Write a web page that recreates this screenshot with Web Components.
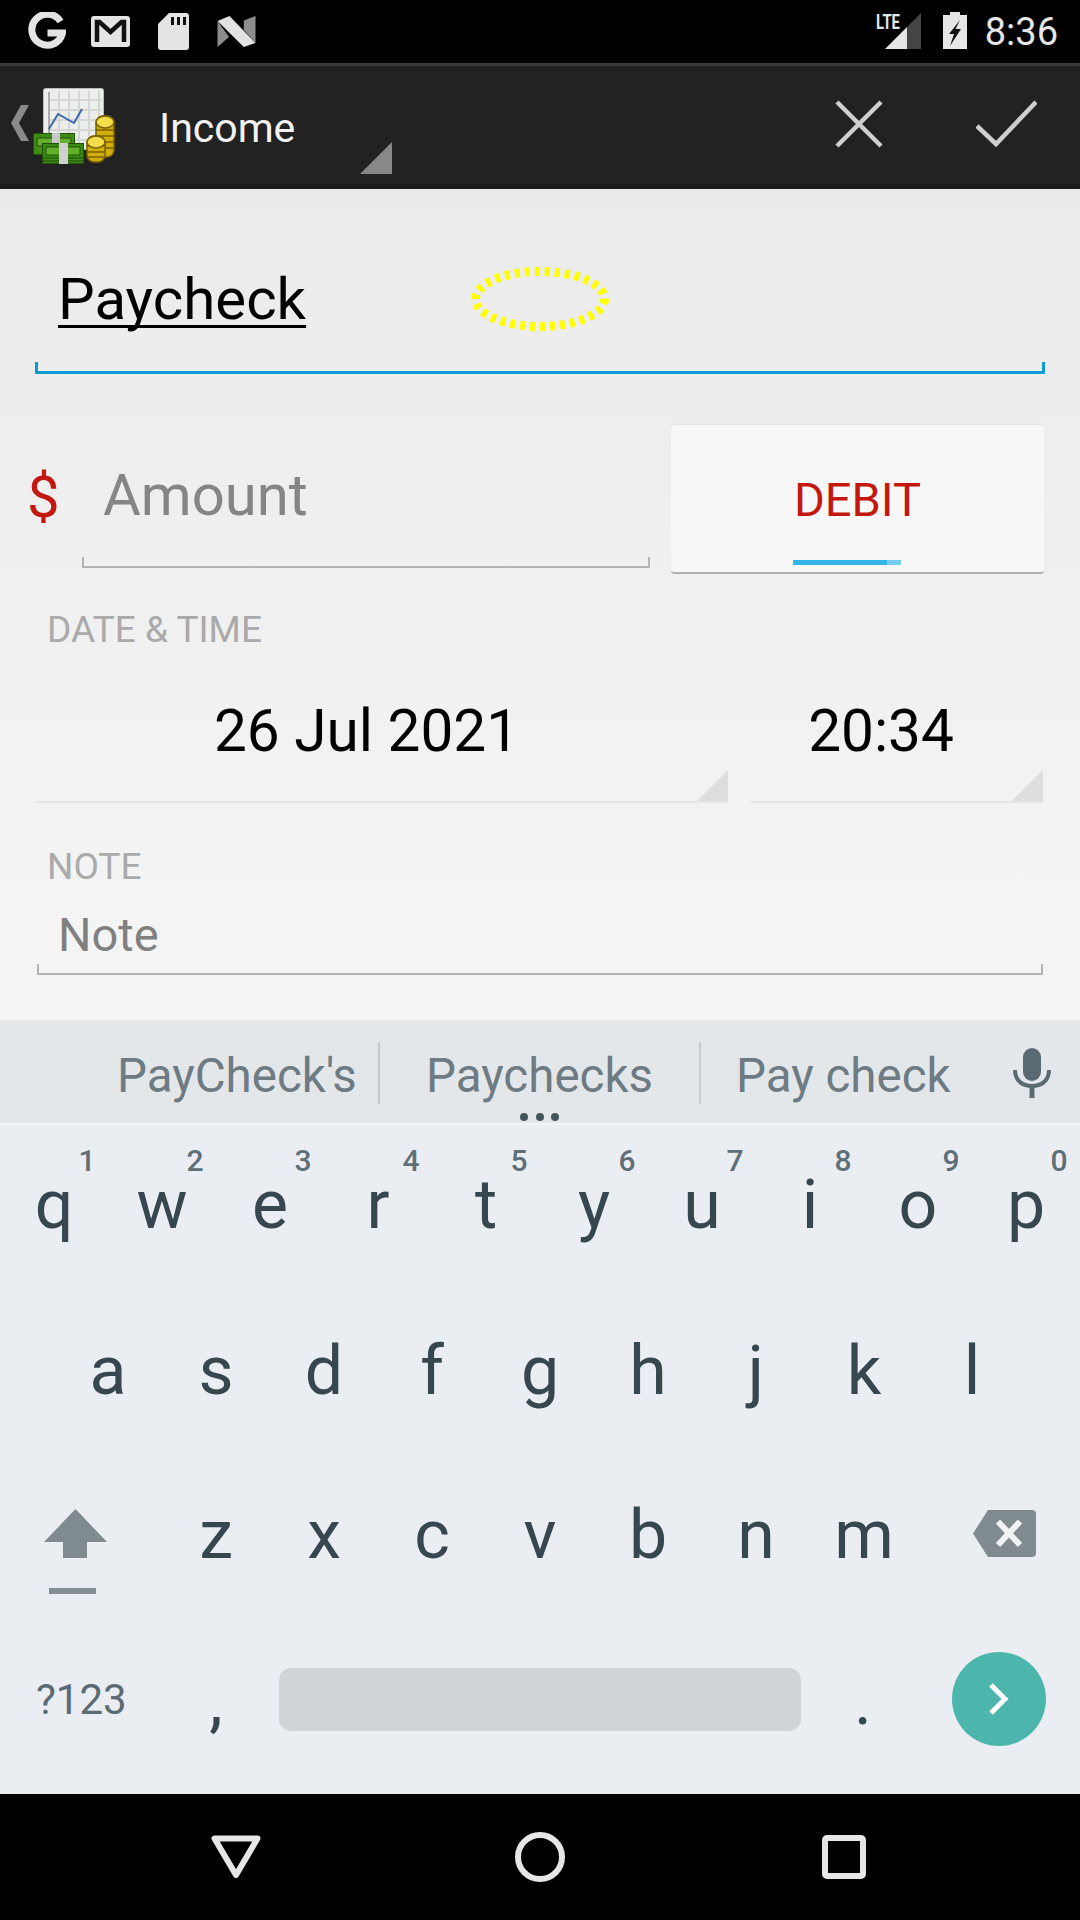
<!DOCTYPE html>
<html>
<head>
<meta charset="utf-8">
<title>Income</title>
<style>
  html, body { margin: 0; padding: 0; }
  body { width: 1080px; height: 1920px; overflow: hidden; font-family: Roboto, "Liberation Sans", sans-serif; }
</style>
</head>
<body>
<app-screen>
  <status-bar></status-bar>
  <action-bar title="Income"></action-bar>
  <edit-form></edit-form>
  <soft-keyboard></soft-keyboard>
  <nav-bar></nav-bar>
</app-screen>

<script>
// Small helper, every element has the same shadow setup
const define = (name, html, Base = HTMLElement) => {
    customElements.define(name, class extends Base {
        constructor() {
            super();
            this.attachShadow({ mode: 'open' });
            this.shadowRoot.innerHTML = typeof html === 'function' ? html(this) : html;
        }
    });
};

define('app-screen', `
<style>
  :host { display: flex; flex-direction: column; width: 1080px; height: 1920px; }
</style>
<slot></slot>`);

define('status-bar', `
<style>
  :host { display: flex; align-items: flex-start; height: 63px; background: #000; color: #e6e6e6; padding: 0 22px 0 28px; box-sizing: border-box; }
  svg { display: block; flex: none; margin-top: 12px; }
  .right { margin-left: auto; display: flex; align-items: flex-start; }
  .time { font-size: 38px; line-height: 38px; margin: 13px 0 0 18px; }
</style>
<svg width="38" height="40" viewBox="0 0 38 40">
  <path d="M32.5 9.5A15.5 15.5 0 1 0 34.5 21H19.5" fill="none" stroke="#e4e4e4" stroke-width="7"/>
</svg>
<svg style="margin-left:25px" width="39" height="40" viewBox="0 0 39 40">
  <rect x="0" y="4" width="39" height="31" rx="3" fill="#e4e4e4"/>
  <path d="M6 30V10h2.5L19.5 20 30.5 10H33v20" fill="none" stroke="#111" stroke-width="4.5"/>
</svg>
<svg style="margin-left:28px" width="31" height="40" viewBox="0 0 31 40">
  <path d="M11 1H28a3 3 0 0 1 3 3V35a3 3 0 0 1-3 3H3a3 3 0 0 1-3-3V12z" fill="#e4e4e4"/>
  <path d="M13 5h3v8h-3zM19 5h3v8h-3zM25 5h3v8h-3z" fill="#111"/>
</svg>
<svg style="margin-left:28px" width="39" height="40" viewBox="0 0 39 40">
  <path d="M0.5 9L12.5 4 38.5 31 26.8 35z" fill="#e2e2e2"/>
  <path d="M0.5 9L12 25 0.5 35z" fill="#8c8c8c"/>
  <path d="M38.5 4V31L26.8 18V8.500z" fill="#8c8c8c"/>
</svg>
<div class="right">
  <svg width="45" height="40" viewBox="0 0 45 40" style="margin-top:11px">
    <path d="M9 38L31 16V38z" fill="#e6e6e6"/>
    <path d="M31 16L45 2V38H31z" fill="#444"/>
    <text x="0" y="18" font-family="Roboto, sans-serif" font-size="20" font-weight="700" fill="#e6e6e6" textLength="24" lengthAdjust="spacingAndGlyphs">LTE</text>
  </svg>
  <svg style="margin-left:22px" width="24" height="40" viewBox="0 0 24 40">
    <path d="M7 0H17V3H24V37H0V3H7z" fill="#e6e6e6"/>
    <path d="M17 8L6 22H11L7 34L18 17H12.500z" fill="#111"/>
  </svg>
  <div class="time">8:36</div>
</div>`);

define('action-bar', host => `
<style>
  :host { display: flex; align-items: flex-start; height: 126px; box-sizing: border-box; background: #222; border-top: 3px solid #3a3a3a; border-bottom: 5px solid #1b1b1b; color: #f2f2f2; }
  svg { display: block; flex: none; }
  .title { font-size: 41px; line-height: 50px; margin: 37px 0 0 42px; width: 201px; }
  .arrow { margin-top: 76px; }
  .spacer { flex: 1; }
</style>
<svg style="margin:39px 0 0 11px" width="18" height="36" viewBox="0 0 18 36"><path d="M10 0H18L8 18 18 36H10L0 18z" fill="#8a8a8a"/></svg>
<svg style="margin:20px 0 0 4px" width="84" height="80" viewBox="0 0 84 80">
  <rect x="10.500" y="2.500" width="60" height="61" rx="2" fill="#eceeec" stroke="#bbb" stroke-width="1"/>
  <path d="M16 14H68M16 24H68M16 34H68M16 44H68M16 54H68M26 5V62M36 5V62M46 5V62M56 5V62M66 5V62" stroke="#d3d6d3" stroke-width="2" fill="none"/>
  <path d="M16 6V48" stroke="#a9aca9" stroke-width="2"/>
  <path d="M16 43L25 28 41 37 49 23" stroke="#3b68a8" stroke-width="2" fill="none"/>
  <g stroke="#234f0c" stroke-width="1">
    <rect x="0.500" y="47.500" width="41" height="21" fill="#3f8f16"/>
    <path d="M4 52H38V60H4z" fill="#62b02c"/>
    <rect x="9.500" y="57.500" width="41" height="20" fill="#3a8a14"/>
    <path d="M13 61H47V69H13z" fill="#62b02c"/>
    <path d="M10 72H50M10 75H50" fill="none"/>
  </g>
  <path d="M19 47h8v10h-8z" fill="#c8c8c8"/>
  <path d="M26 57h9v21h-9z" fill="#d0d0d0"/>
  <g stroke="#7a6200" stroke-width="1.500">
    <rect x="63" y="30" width="18" height="41" rx="7" fill="#d2ae0c"/>
    <path d="M63 38h18M63 44h18M63 50h18M63 56h18M63 62h18" fill="none"/>
    <ellipse cx="72" cy="36" rx="9" ry="6" fill="#f4dc4a"/>
    <rect x="54" y="50" width="18" height="26" rx="7" fill="#d2ae0c"/>
    <path d="M54 60h18M54 66h18M54 71h18" fill="none"/>
    <ellipse cx="63" cy="56" rx="9" ry="6" fill="#f4dc4a"/>
  </g>
</svg>
<div class="title">${host.getAttribute('title')}</div>
<svg class="arrow" width="32" height="32" viewBox="0 0 32 32"><path d="M32 0V32H0z" fill="#888"/></svg>
<div class="spacer"></div>
<svg style="margin:34px 0 0" width="48" height="48" viewBox="0 0 48 48"><path d="M2 2L46 46M46 2L2 46" stroke="#cfcfcf" stroke-width="4.500" fill="none"/></svg>
<svg style="margin:34px 43px 0 93px" width="61" height="48" viewBox="0 0 61 48"><path d="M1 26L20 44 60 2" stroke="#cfcfcf" stroke-width="4.500" fill="none"/></svg>`);

// Holo style underlined field, with the small ticks at both ends
define('line-field', `
<style>
  :host { --c: #b4b4b4; --w: 2px; display: block; box-sizing: border-box; border-bottom: var(--w) solid var(--c);
    background: linear-gradient(var(--c), var(--c)) left bottom / var(--w) 9px no-repeat,
                linear-gradient(var(--c), var(--c)) right bottom / var(--w) 9px no-repeat; }
</style>
<slot></slot>`);

define('drop-field', `
<style>
  :host { display: block; position: relative; box-sizing: border-box; border-bottom: 2px solid #e6e6e6; font-size: 58.5px; line-height: 76px; color: #000; text-align: center; padding-right: 31px; }
  svg { position: absolute; right: 0; bottom: 0; }
</style>
<slot></slot>
<svg width="31" height="31" viewBox="0 0 31 31"><path d="M31 0V31H0z" fill="#ddd"/></svg>`);

define('debit-button', `
<style>
  :host { display: block; position: relative; width: 373px; height: 150px; box-sizing: border-box; background: #f8f8f8; border-radius: 4px; border-top: 1px solid #e6e6e6; border-bottom: 2px solid #b2b2b2; box-shadow: 0 0 1px #ddd; color: #c4170f; font-size: 47px; line-height: 46px; text-align: center; padding-top: 52px; }
  .bar { position: absolute; left: 122px; top: 135px; width: 108px; height: 5px; background: linear-gradient(90deg, #33b5e5 87%, #74cdee 87%); }
</style>
<slot></slot><div class="bar"></div>`);

define('edit-form', `
<style>
  :host { display: block; height: 831px; box-sizing: border-box; background: linear-gradient(#ebebeb, #f5f5f5); font-family: Roboto, sans-serif; }
  .title { margin: 72px 35px 0; height: 113px; --c: #0a9bd2; --w: 3px; }
  .title span { display: inline-block; margin-left: 23px; font-size: 58.2px; line-height: 76px; color: #000; text-decoration: underline; text-decoration-thickness: 3px; text-underline-offset: 6px; text-decoration-skip-ink: none; }
  .oval { position: absolute; left: 471px; top: 267px; }
  .amount-row { display: flex; margin: 50px 36px 0 0; align-items: flex-start; }
  .dollar { color: #c4170f; font-size: 58px; line-height: 76px; width: 82px; margin-top: 35px; padding-left: 27px; box-sizing: border-box; }
  .amount { width: 568px; height: 144px; font-size: 58px; line-height: 76px; color: #858585; padding: 33px 0 0 21px; margin-right: 21px; }
  .label { font-size: 37px; line-height: 40px; color: #aaa; margin-left: 47px; }
  .date-label { margin-top: 36px; }
  .dates { display: grid; grid-template-columns: 692px 293px; column-gap: 22px; margin: 43px 37px 0 36px; }
  .dates drop-field { height: 110px; }
  .note-label { margin-top: 44px; }
  .note { margin: 21px 37px 0; height: 67px; font-size: 47px; line-height: 54px; color: #808080; padding-left: 21px; }
</style>
<line-field class="title"><span>Paycheck</span></line-field>
<svg class="oval" width="138" height="64" viewBox="0 0 138 64"><ellipse cx="69" cy="32" rx="64.500" ry="27.500" fill="none" stroke="#ff0" stroke-width="9" stroke-dasharray="5 5"/></svg>
<div class="amount-row">
  <div class="dollar">$</div>
  <line-field class="amount">Amount</line-field>
  <debit-button>DEBIT</debit-button>
</div>
<div class="label date-label">DATE &amp; TIME</div>
<div class="dates">
  <drop-field>26 Jul 2021</drop-field>
  <drop-field>20:34</drop-field>
</div>
<div class="label note-label">NOTE</div>
<line-field class="note">Note</line-field>`);

define('kb-key', host => {
    const hint = host.getAttribute('hint');
    return `
<style>
  :host { display: block; position: relative; text-align: center; font-size: 68px; color: #37474f; line-height: inherit; }
  .hint { position: absolute; left: 73px; top: 21px; width: 28px; font-size: 30px; line-height: 30px; font-weight: 500; color: #5f6f78; text-align: center; }
</style>
<slot></slot>${hint ? `<span class="hint">${hint}</span>` : ''}`;
});

define('soft-keyboard', () => {
    const row = (letters, hints) => [...letters].map((l, i) =>
        `<kb-key${hints ? ` hint="${hints[i]}"` : ''}>${l}</kb-key>`).join('');
    return `
<style>
  :host { display: block; height: 775px; background: #eaeef2; font-family: Roboto, sans-serif; }
  .strip { display: flex; height: 106px; box-sizing: border-box; background: #e3e7ea; border-top: 2px solid #eceef0; border-bottom: 2px solid #f2f4f6; position: relative; font-size: 47.5px; line-height: 54px; color: #6e7b83; }
  .sug { height: 100px; padding-top: 28px; box-sizing: border-box; white-space: nowrap; }
  .sep { width: 2px; height: 62px; margin-top: 21px; background: #c5cacd; flex: none; }
  .mic { margin: 27px 0 0 37px; flex: none; }
  .dots { position: absolute; left: 520px; top: 91px; }
  .keys { display: block; }
  .row { display: grid; }
  .r1 { grid-template-columns: repeat(10, 108px); height: 163px; line-height: 160px; }
  .r2 { grid-template-columns: repeat(9, 108px); height: 166px; line-height: 166px; padding-left: 54px; }
  .r3 { grid-template-columns: 162px repeat(7, 108px) 162px; height: 164px; line-height: 162px; }
  .r4 { display: flex; height: 174px; align-items: flex-start; }
  .r3 svg { display: block; }
  .shift { margin: 55px 0 0 44px; }
  .del { margin: 56px 0 0 55px; }
  .sym { width: 126px; margin-left: 36px; font-size: 42px; line-height: 50px; color: #5c6b73; padding-top: 57px; height: 50px; }
  .comma { width: 108px; line-height: 166px; }
  .space { width: 522px; height: 63px; margin: 50px 0 0 9px; background: #d0d4d7; border-radius: 12px; }
  .period { width: 124px; line-height: 166px; }
  .go { width: 94px; height: 94px; margin: 34px 0 0 27px; border-radius: 50%; background: #4db6ac; display: flex; align-items: center; justify-content: center; }
</style>
<div class="strip">
  <div class="sug" style="margin-left:117px;width:261px">PayCheck's</div>
  <div class="sep"></div>
  <div class="sug" style="margin-left:46px;width:273px">Paychecks</div>
  <div class="sep"></div>
  <div class="sug" style="margin-left:35px;width:240px">Pay check</div>
  <svg class="mic" width="38" height="50" viewBox="0 0 38 50">
    <rect x="10" y="0" width="18" height="33" rx="9" fill="#5a6a73"/>
    <path d="M2 22C2 33 10 38 19 38S36 33 36 22" fill="none" stroke="#5a6a73" stroke-width="4"/>
    <path d="M19 38V50" stroke="#5a6a73" stroke-width="5"/>
  </svg>
  <svg class="dots" width="40" height="10" viewBox="0 0 40 10"><g fill="#46555d"><ellipse cx="4" cy="5" rx="4" ry="4"/><ellipse cx="20" cy="5" rx="4" ry="4"/><ellipse cx="35" cy="5" rx="4" ry="4"/></g></svg>
</div>
<div class="keys">
  <div class="row r1">${row('qwertyuiop', '1234567890')}</div>
  <div class="row r2">${row('asdfghjkl')}</div>
  <div class="row r3">
    <div>
      <svg class="shift" width="63" height="86" viewBox="0 0 63 86">
        <path d="M31.500 0L63 33H43V49H19V33H0z" fill="#7f8b8f"/>
        <rect x="5" y="79" width="47" height="6" fill="#838f96"/>
      </svg>
    </div>
    ${row('zxcvbnm')}
    <div>
      <svg class="del" width="63" height="47" viewBox="0 0 63 47">
        <path d="M15 0H59a4 4 0 0 1 4 4V43a4 4 0 0 1-4 4H15L0 23.500z" fill="#7f8b8f"/>
        <path d="M25 11.500L47 35M47 11.500L25 35" stroke="#f0f2f4" stroke-width="6" fill="none"/>
      </svg>
    </div>
  </div>
  <div class="row r4">
    <div class="sym">?123</div>
    <kb-key class="comma">,</kb-key>
    <div class="space"></div>
    <kb-key class="period">.</kb-key>
    <div class="go">
      <svg width="20" height="32" viewBox="0 0 20 32"><path d="M2 2L16 16 2 30" fill="none" stroke="#fff" stroke-width="5"/></svg>
    </div>
  </div>
</div>`;
});

define('nav-bar', `
<style>
  :host { display: grid; grid-template-columns: repeat(3, 304px); justify-content: center; justify-items: center; align-items: center; height: 126px; background: #000; }
  svg { display: block; }
</style>
<svg width="50" height="44" viewBox="0 0 50 44"><path d="M3.500 3.500H46.500L25 40z" fill="none" stroke="#e6e6e6" stroke-width="6" stroke-linejoin="round"/></svg>
<svg width="50" height="50" viewBox="0 0 50 50"><circle cx="25" cy="25" r="22" fill="none" stroke="#e6e6e6" stroke-width="6"/></svg>
<svg width="44" height="44" viewBox="0 0 44 44"><rect x="3" y="3" width="38" height="38" rx="2" fill="none" stroke="#e6e6e6" stroke-width="6"/></svg>`);
</script>
</body>
</html>
